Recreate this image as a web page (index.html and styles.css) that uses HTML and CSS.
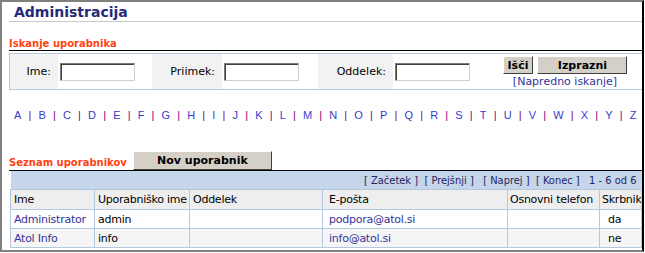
FILE: index.html
```html
<!DOCTYPE html>
<html lang="sl">
<head>
    <meta charset="UTF-8">
    <title>Administracija</title>
    <link rel="stylesheet" href="styles.css">
</head>
<body>

    <div class="page">
        <div class="title">Administracija</div>

        <div class="section-head">Iskanje uporabnika</div>
        <div class="search">
            <div class="lbl">Ime:</div>
            <div class="fld"><input type="text"></div>
            <div class="lbl">Priimek:</div>
            <div class="fld"><input type="text"></div>
            <div class="lbl">Oddelek:</div>
            <div class="fld"><input type="text"></div>
            <div class="actions">
                <div class="btns">
                    <button class="btn">Išči</button>
                    <button class="btn wide">Izprazni</button>
                </div>
                <a href="#" class="link">[Napredno iskanje]</a>
            </div>
            <div class="rest"></div>
        </div>

        <div class="alpha">
            <a href="#">A</a><span class="sep">|</span><a href="#">B</a><span class="sep">|</span><a href="#">C</a><span class="sep">|</span><a href="#">D</a><span class="sep">|</span><a href="#">E</a><span class="sep">|</span><a href="#">F</a><span class="sep">|</span><a href="#">G</a><span class="sep">|</span><a href="#">H</a><span class="sep">|</span><a href="#">I</a><span class="sep">|</span><a href="#">J</a><span class="sep">|</span><a href="#">K</a><span class="sep">|</span><a href="#">L</a><span class="sep">|</span><a href="#">M</a><span class="sep">|</span><a href="#">N</a><span class="sep">|</span><a href="#">O</a><span class="sep">|</span><a href="#">P</a><span class="sep">|</span><a href="#">Q</a><span class="sep">|</span><a href="#">R</a><span class="sep">|</span><a href="#">S</a><span class="sep">|</span><a href="#">T</a><span class="sep">|</span><a href="#">U</a><span class="sep">|</span><a href="#">V</a><span class="sep">|</span><a href="#">W</a><span class="sep">|</span><a href="#">X</a><span class="sep">|</span><a href="#">Y</a><span class="sep">|</span><a href="#">Z</a>
        </div>

        <div class="section-head list-head">
            <span class="list-title">Seznam uporabnikov</span>
            <button class="btn new">Nov uporabnik</button>
        </div>

        <table class="users">
            <colgroup>
                <col style="width:84px">
                <col style="width:95px">
                <col style="width:133px">
                <col style="width:185px">
                <col style="width:92px">
                <col>
            </colgroup>
            <tr class="pager">
                <td colspan="6">[ Začetek ]&nbsp; [ Prejšnji ]&nbsp;&nbsp; [ Naprej ]&nbsp; [ Konec ]&nbsp;&nbsp; 1 - 6 od 6</td>
            </tr>
            <tr class="head">
                <th>Ime</th>
                <th>Uporabniško ime</th>
                <th>Oddelek</th>
                <th class="mail">E-pošta</th>
                <th class="tight">Osnovni telefon</th>
                <th class="tight">Skrbnik</th>
            </tr>
            <tr>
                <td><a href="#">Administrator</a></td>
                <td>admin</td>
                <td></td>
                <td class="mail"><a href="#">podpora@atol.si</a></td>
                <td></td>
                <td class="flag">da</td>
            </tr>
            <tr class="odd">
                <td><a href="#">Atol Info</a></td>
                <td>info</td>
                <td></td>
                <td class="mail"><a href="#">info@atol.si</a></td>
                <td></td>
                <td class="flag">ne</td>
            </tr>
        </table>
    </div>

</body>
</html>
```

FILE: styles.css
```css
body {
    margin: 0;
    font-family: 'DejaVu Sans', Verdana, sans-serif;
    font-size: 11px;
    color: #000;
    background-color: #fff;
}

a {
    color: #333399;
    text-decoration: none;
}

.page {
    width: 644px;
    height: 252px;
    box-sizing: border-box;
    padding-left: 7px;
    border: 2px solid #808080;
    border-right-color: #000;
    overflow: hidden;
}

.title {
    padding: 2px 0 0 5px;
    line-height: 17px;
    font-size: 14px;
    font-weight: bold;
    color: #262a78;
    border-bottom: 1px solid #c8c8c8;
}

.section-head {
    margin-top: 15px;
    line-height: 13px;
    font-size: 10px;
    font-weight: bold;
    color: #ff4213;
    border-bottom: 1px solid #000;
}

/* search box */
.search {
    display: grid;
    grid-template-columns: 48px 94px 70px 96px 75px 100px 144px 1fr;
    height: 35px;
    margin-top: 2px;
    border: 1px solid #b4c8e0;
    border-right: none;
}

.lbl {
    display: flex;
    align-items: center;
    justify-content: flex-end;
    padding-right: 7px;
    background-color: #f2f2f2;
}

.fld {
    display: flex;
    align-items: center;
    padding-left: 2px;
}

.fld input {
    width: 75px;
    height: 18px;
    box-sizing: border-box;
    margin: 0;
    padding: 0 2px;
    border: 1px solid;
    border-color: #7a7a7a #d4d0c8 #d4d0c8 #7a7a7a;
    box-shadow: inset 1px 1px 0 #404040;
    background-color: #fff;
}

.actions {
    display: flex;
    flex-direction: column;
    align-items: center;
    padding-top: 2px;
}

.btns {
    display: flex;
    gap: 4px;
}

.btn {
    height: 18px;
    margin: 0;
    padding: 0 4px;
    font-family: 'DejaVu Sans', Verdana, sans-serif;
    font-size: 11px;
    font-weight: bold;
    color: #000;
    background-color: #d4d0c8;
    border: 1px solid;
    border-color: #fff #404040 #404040 #fff;
    cursor: pointer;
}

.btn.wide {
    width: 90px;
}

.link {
    margin-top: 2px;
    line-height: 11px;
}

/* letters */
.alpha {
    margin-top: 18px;
    padding-left: 5px;
    white-space: nowrap;
    font-family: 'Liberation Sans', Arial, sans-serif;
    font-size: 11px;
    line-height: 14px;
}

.alpha a {
    color: #3a3acc;
}

.alpha .sep {
    margin: 0 7.15px;
    color: #800080;
}

.list-head {
    display: flex;
    align-items: flex-end;
    margin-top: 29px;
}

.list-title {
    padding-bottom: 1px;
}

.btn.new {
    width: 139px;
    height: 19px;
    margin-left: 6px;
}

/* user list */
.users {
    width: 632px;
    margin-left: 1px;
    border-collapse: collapse;
    table-layout: fixed;
}

.users td,
.users th {
    padding: 0 3px;
    border: 1px solid #b4c8e0;
    text-align: left;
    font-weight: normal;
    letter-spacing: -0.25px;
    white-space: nowrap;
    overflow: hidden;
}

.pager td {
    height: 22px;
    padding-right: 5px;
    border: none;
    border-bottom: 1px solid #b4c8e0;
    text-align: right;
    font-family: 'DejaVu Sans Condensed', 'Liberation Sans', sans-serif;
    letter-spacing: 0;
    color: #24245e;
    background-color: #c6d6ea;
}

.head th {
    height: 19px;
    background-color: #eeeeee;
}

.users td {
    height: 18px;
}

.users .mail {
    padding-left: 6px;
}

.users .tight {
    padding-left: 2px;
    padding-right: 0;
}

.users .flag {
    padding-left: 8px;
}

.odd td {
    background-color: #f5f5f5;
}
```
